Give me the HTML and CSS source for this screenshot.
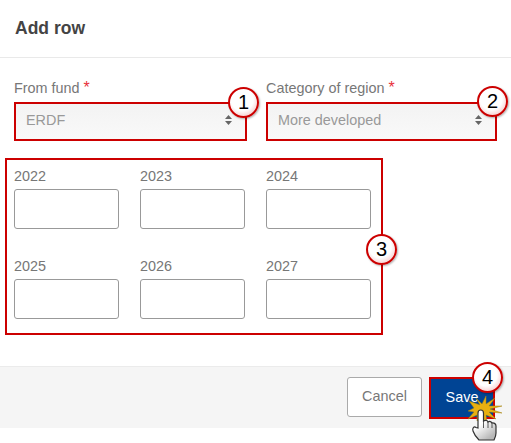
FILE: index.html
```html
<!DOCTYPE html>
<html lang="en">
<head>
    <meta charset="utf-8">
    <title>Add row</title>
    <link rel="stylesheet" href="styles.css">
</head>
<body>
    <div class="modal">
        <!-- Header -->
        <div class="modal-header">Add row</div>

        <div class="modal-body">
            <div class="select-row">
                <div class="field field-fund">
                    <div class="label">From fund <span class="req">*</span></div>
                    <div class="select marked">
                        <span class="select-text">ERDF</span>
                        <svg class="arrows" width="7" height="10" viewBox="0 0 7 10"><path d="M3.500 0L7 4H0zM0 6H7L3.500 10z"/></svg>
                        <span class="bubble bubble-one">1</span>
                    </div>
                </div>
                <div class="field field-region">
                    <div class="label">Category of region <span class="req">*</span></div>
                    <div class="select marked">
                        <span class="select-text">More developed</span>
                        <svg class="arrows" width="7" height="10" viewBox="0 0 7 10"><path d="M3.500 0L7 4H0zM0 6H7L3.500 10z"/></svg>
                        <span class="bubble bubble-two">2</span>
                    </div>
                </div>
            </div>

            <!-- Years -->
            <div class="years marked">
                <div class="year"><div class="label">2022</div><input type="text"></div>
                <div class="year"><div class="label">2023</div><input type="text"></div>
                <div class="year"><div class="label">2024</div><input type="text"></div>
                <div class="year"><div class="label">2025</div><input type="text"></div>
                <div class="year"><div class="label">2026</div><input type="text"></div>
                <div class="year"><div class="label">2027</div><input type="text"></div>
                <span class="bubble bubble-three">3</span>
            </div>
        </div>

        <!-- Footer -->
        <div class="modal-footer">
            <button class="btn btn-cancel">Cancel</button>
            <button class="btn btn-save marked">Save</button>
            <span class="bubble bubble-four">4</span>
            <svg class="cursor" width="45" height="47" viewBox="462 396 45 47">
                <defs>
                    <linearGradient id="hand-shade" x1="0" y1="0" x2="0.6" y2="1">
                        <stop offset="0.5" stop-color="#ffffff"/>
                        <stop offset="1" stop-color="#b8b8b8"/>
                    </linearGradient>
                </defs>
                <path class="spark" d="M480 405L476 398L482 404L486 396L486 404L495 398L489 406L502 406L490 409L502 413L489 412L496 419L486 415L487 423L482 416L477 421L477 415L468 419L474 412L468 411L474 408L469 401z"/>
                <path class="hand" d="M478 428V413C478 409 483.500 409 483.500 413V421C485 420 487.500 420 488 422C489.500 421 491.500 421.500 492 423C493.500 422.500 496 423.500 496 426V433C496 436 495 438 494 440H479C477 438 474 434 473 431C472 428 474 426 476 427.500z"/>
                <path class="hand-lines" d="M483.500 421V428M488 422V428M492 423V428"/>
            </svg>
        </div>
    </div>
</body>
</html>
```

FILE: styles.css
```css
* {
    box-sizing: border-box;
}
body {
    margin: 0;
    background-color: white;
    font-family: 'Liberation Sans', Arial, sans-serif;
    font-size: 14.400px;
    color: #777;
}
.modal {
    width: 511px;
    height: 443px;
    overflow: hidden;
}
.modal-header {
    height: 58px;
    padding: 18px 15px 0;
    border-bottom: 1px solid #e9e9e9;
    font-size: 17.500px;
    font-weight: bold;
    line-height: 20px;
    color: #444;
}
.modal-body {
    height: 308px;
    padding: 22px 14px 0 5px;
}
.select-row {
    display: flex;
    gap: 19px;
    padding-left: 9px;
}
.field-fund {
    width: 233px;
}
.field-region {
    width: 231px;
}
.field .label {
    margin-bottom: 6px;
}
.label {
    line-height: 16px;
    margin-bottom: 5px;
    color: #777;
}
.req {
    color: #e8303a;
    font-size: 16px;
    line-height: 10px;
}
.marked {
    border: 2px solid #cc0000;
}
.select {
    position: relative;
    display: flex;
    align-items: center;
    justify-content: space-between;
    height: 39px;
    padding: 0 13px 3px 10px;
    background: linear-gradient(#f3f3f3, #f9f9f9);
    color: #999;
}
.arrows {
    fill: #666;
}
.years {
    position: relative;
    display: grid;
    grid-template-columns: repeat(3, 105px);
    align-content: start;
    column-gap: 21px;
    row-gap: 29px;
    width: 378px;
    height: 177px;
    margin-top: 17px;
    padding: 8px 7px 0;
}
.year input {
    display: block;
    width: 105px;
    height: 40px;
    border: 1px solid #999;
    border-radius: 3px;
    background: white;
}
.modal-footer {
    position: relative;
    display: flex;
    justify-content: flex-end;
    gap: 7px;
    height: 62px;
    padding: 10px 16px 0 0;
    background-color: #f5f5f5;
    border-top: 1px solid #ebebeb;
}
.btn {
    height: 40px;
    padding: 0 0 2px;
    font-family: inherit;
    font-size: 14.400px;
    border-radius: 3px;
}
.btn-cancel {
    width: 75px;
    border: 1px solid #aaa;
    background: white;
    color: #777;
}
.btn-save {
    width: 66px;
    height: 42px;
    background: #004494;
    color: white;
    border-radius: 0;
}
.bubble {
    position: absolute;
    width: 31px;
    height: 31px;
    border: 2px solid #cc0000;
    border-radius: 50%;
    background: radial-gradient(circle at 45% 40%, #fff 50%, #f2b4b4 95%);
    box-shadow: 1px 1px 2px rgba(0, 0, 0, 0.3);
    color: black;
    font-size: 20px;
    font-weight: normal;
    line-height: 27px;
    text-align: center;
}
.bubble-one {
    top: -17px;
    right: -14px;
}
.bubble-two {
    top: -18px;
    right: -13px;
}
.bubble-three {
    top: 74px;
    right: -16px;
}
.bubble-four {
    top: -5px;
    right: 8px;
}
.cursor {
    position: absolute;
    left: 462px;
    top: 29px;
}
.spark {
    fill: #e8b010;
    stroke: #a08010;
    stroke-width: 0.500;
}
.hand {
    fill: url(#hand-shade);
    stroke: #333;
    stroke-width: 1.200;
}
.hand-lines {
    fill: none;
    stroke: #333;
    stroke-width: 0.800;
}
```
